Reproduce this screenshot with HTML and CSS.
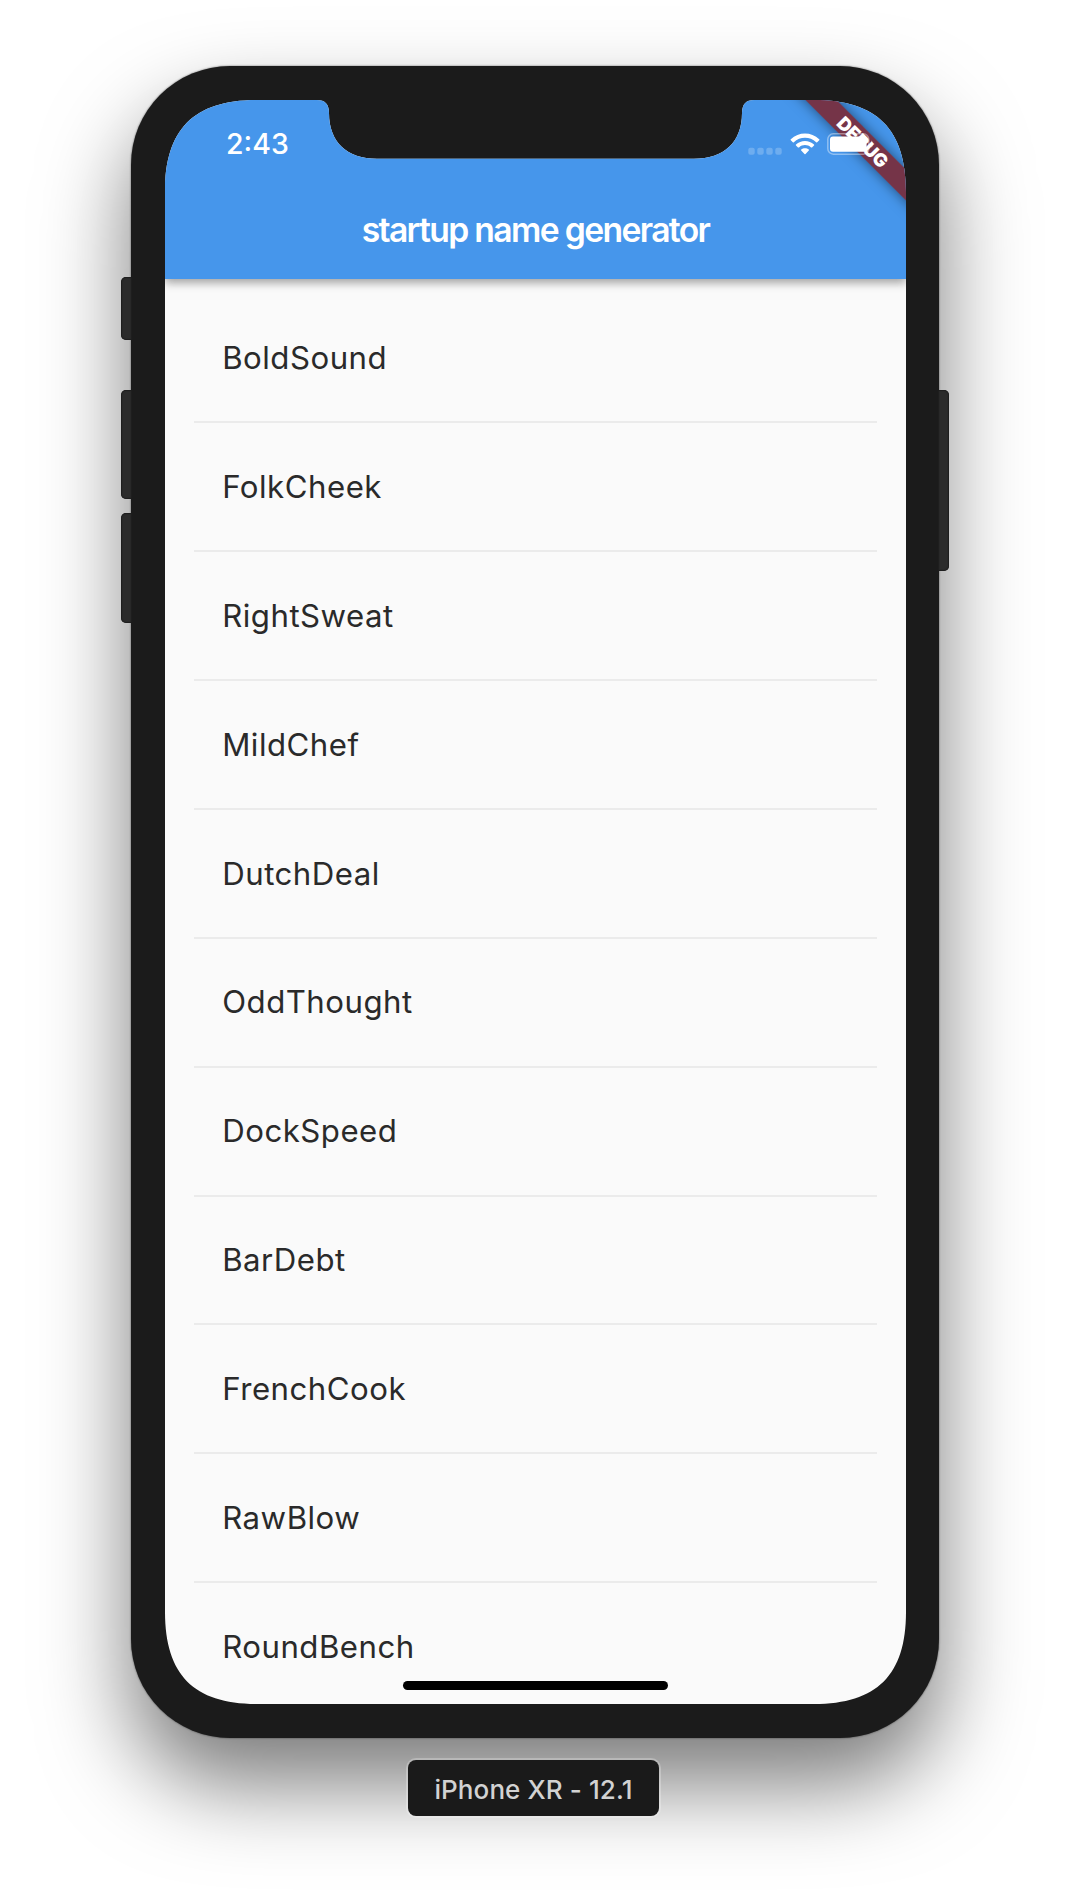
FILE: index.html
```html
<!DOCTYPE html>
<html lang="en">
<head>
<meta charset="utf-8">
<title>startup name generator</title>
<link rel="stylesheet" href="styles.css">
</head>
<body>
<main class="stage">
  <div class="device">
    <span class="key key-mute"></span>
    <span class="key key-up"></span>
    <span class="key key-down"></span>
    <span class="key key-power"></span>
    <div class="screen">
      <header class="appbar">
        <div class="status">
          <span class="time">2:43</span>
          <div class="indicators">
            <svg class="cell" width="34" height="22" viewBox="0 0 34 22">
              <g fill="#fff" fill-opacity=".22">
                <rect x="0.3" y="14.7" width="6.4" height="7" rx="2"/>
                <rect x="9.3" y="14.7" width="6.4" height="7" rx="2"/>
                <rect x="18.3" y="14.7" width="6.4" height="7" rx="2"/>
                <rect x="27.3" y="14.7" width="6.4" height="7" rx="2"/>
              </g>
            </svg>
            <svg class="wifi" width="30" height="22" viewBox="0 0 30 22">
              <g fill="#fff">
                <path d="M.8 6.3C8.600-1.300 21.400-1.300 29.200 6.300Q29.700 6.800 29.200 7.300L27.200 9.200Q26.700 9.600 26.200 9.200C20 3.300 10 3.300 3.800 9.200Q3.300 9.600 2.800 9.200L.8 7.300Q.3 6.800 .8 6.300Z"/>
                <path d="M6 11.500C11 6.700 19 6.700 24 11.500Q24.500 12 24 12.500L22 14.400Q21.500 14.800 21 14.400C17.600 11.300 12.400 11.300 9 14.400Q8.500 14.800 8 14.400L6 12.500Q5.500 12 6 11.500Z"/>
                <path d="M11.200 16.600C13.300 14.700 16.700 14.700 18.800 16.600Q19.300 17.100 18.800 17.600L15.500 20.900Q15 21.400 14.500 20.900L11.200 17.600Q10.700 17.100 11.200 16.600Z"/>
              </g>
            </svg>
            <svg class="battery" width="48" height="22" viewBox="0 0 48 22">
              <rect x=".8" y=".8" width="41" height="20.400" rx="5.500" fill="none" stroke="#fff" stroke-opacity=".4" stroke-width="1.500"/>
              <rect x="3" y="3.400" width="36.600" height="15.300" rx="3" fill="#fff"/>
              <path d="M44 7.500C47 8.700 47 13.300 44 14.500Z" fill="#fff" fill-opacity=".4"/>
            </svg>
          </div>
        </div>
        <h1 class="title">startup name generator</h1>
      </header>
      <ul class="names">
        <li>BoldSound</li>
        <li>FolkCheek</li>
        <li>RightSweat</li>
        <li>MildChef</li>
        <li>DutchDeal</li>
        <li>OddThought</li>
        <li>DockSpeed</li>
        <li>BarDebt</li>
        <li>FrenchCook</li>
        <li>RawBlow</li>
        <li>RoundBench</li>
      </ul>
      <div class="ribbon">DEBUG</div>
      <span class="home"></span>
    </div>
  </div>
  <div class="caption">iPhone XR - 12.1</div>
</main>
</body>
</html>
```
FILE: styles.css
```css
* { box-sizing: border-box; }

body {
  margin: 0;
  background: #fff;
  font-family: Inter, "Liberation Sans", sans-serif;
}

.stage {
  height: 1900px;
  padding-top: 66px;
  display: flex;
  flex-direction: column;
  align-items: center;
  gap: 22px;
  overflow: hidden;
}

.device {
  position: relative;
  width: 808px;
  height: 1672px;
  padding: 34px 33px 34px 34px;
  border-radius: 99px;
  background: #1b1b1b;
  box-shadow: 0 0 2px rgba(0, 0, 0, .6), 0 46px 88px rgba(0, 0, 0, .52);
}

.key {
  position: absolute;
  left: -10.500px;
  width: 11px;
  border-radius: 5px 0 0 5px;
  background: #2b2b2b;
  box-shadow: inset 0 0 1px 1px #1d1d1d;
}
.key-mute { top: 211px; height: 63px; }
.key-up { top: 324px; height: 109px; }
.key-down { top: 447px; height: 110px; }
.key-power {
  left: auto;
  right: -10px;
  top: 324px;
  height: 181px;
  border-radius: 0 5px 5px 0;
}

.screen {
  position: relative;
  height: 1604px;
  overflow: hidden;
  background: #fafafa;
  clip-path: path("M0 92C0 29 29 0 92 0H152Q164 0 164 13C164 42 182 58.700 212 58.700H529C559 58.700 577 42 577 13Q577 0 589 0H649C712 0 741 29 741 92V1512C741 1575 712 1604 649 1604H92C29 1604 0 1575 0 1512Z");
}

.appbar {
  position: relative;
  height: 179px;
  color: #fff;
  background: #4696eb;
  box-shadow: 0 4px 9px rgba(0, 0, 0, .28), 0 1px 10px rgba(0, 0, 0, .15);
}

.status {
  position: relative;
  z-index: 2;
  height: 79px;
  padding: 9px 31px 0 61px;
  display: flex;
  align-items: center;
  justify-content: space-between;
}
.time {
  font-size: 28.500px;
  font-weight: 550;
  line-height: 36px;
}
.indicators {
  display: flex;
  gap: 7.500px;
}

.title {
  height: 100px;
  margin: 0;
  text-align: center;
  font-size: 33.700px;
  font-weight: 600;
  line-height: 102px;
  letter-spacing: -1.650px;
}

.names {
  margin: 0;
  padding: 13.600px 28.600px 0;
  list-style: none;
}
.names li {
  height: 128.870px;
  padding: 29.500px 28.600px 0;
  font-size: 31.200px;
  line-height: 73px;
  letter-spacing: .5px;
  color: #2a2a2a;
}
.names li + li {
  background: linear-gradient(#ebebeb, #ebebeb) 0 0 / 100% 2px no-repeat;
}

.ribbon {
  position: absolute;
  z-index: 1;
  top: 31.500px;
  left: 598.500px;
  width: 200px;
  height: 22px;
  color: #fff;
  background: rgba(122, 41, 54, .9);
  box-shadow: 0 0 13px rgba(0, 0, 0, .5);
  font-size: 18.300px;
  font-weight: 900;
  line-height: 22px;
  text-indent: -3px;
  text-align: center;
  transform: rotate(45deg);
}

.home {
  position: absolute;
  left: 238px;
  bottom: 14px;
  width: 265px;
  height: 9px;
  border-radius: 5px;
  background: #000;
}

.caption {
  position: relative;
  width: 251px;
  height: 56px;
  margin-left: -3px;
  border-radius: 8px;
  background: #1a1a1a;
  box-shadow: 0 0 0 2px rgba(255, 255, 255, .25);
  color: #d2d2d2;
  font-size: 26px;
  font-weight: 450;
  line-height: 60px;
  letter-spacing: .1px;
  text-align: center;
}
```
